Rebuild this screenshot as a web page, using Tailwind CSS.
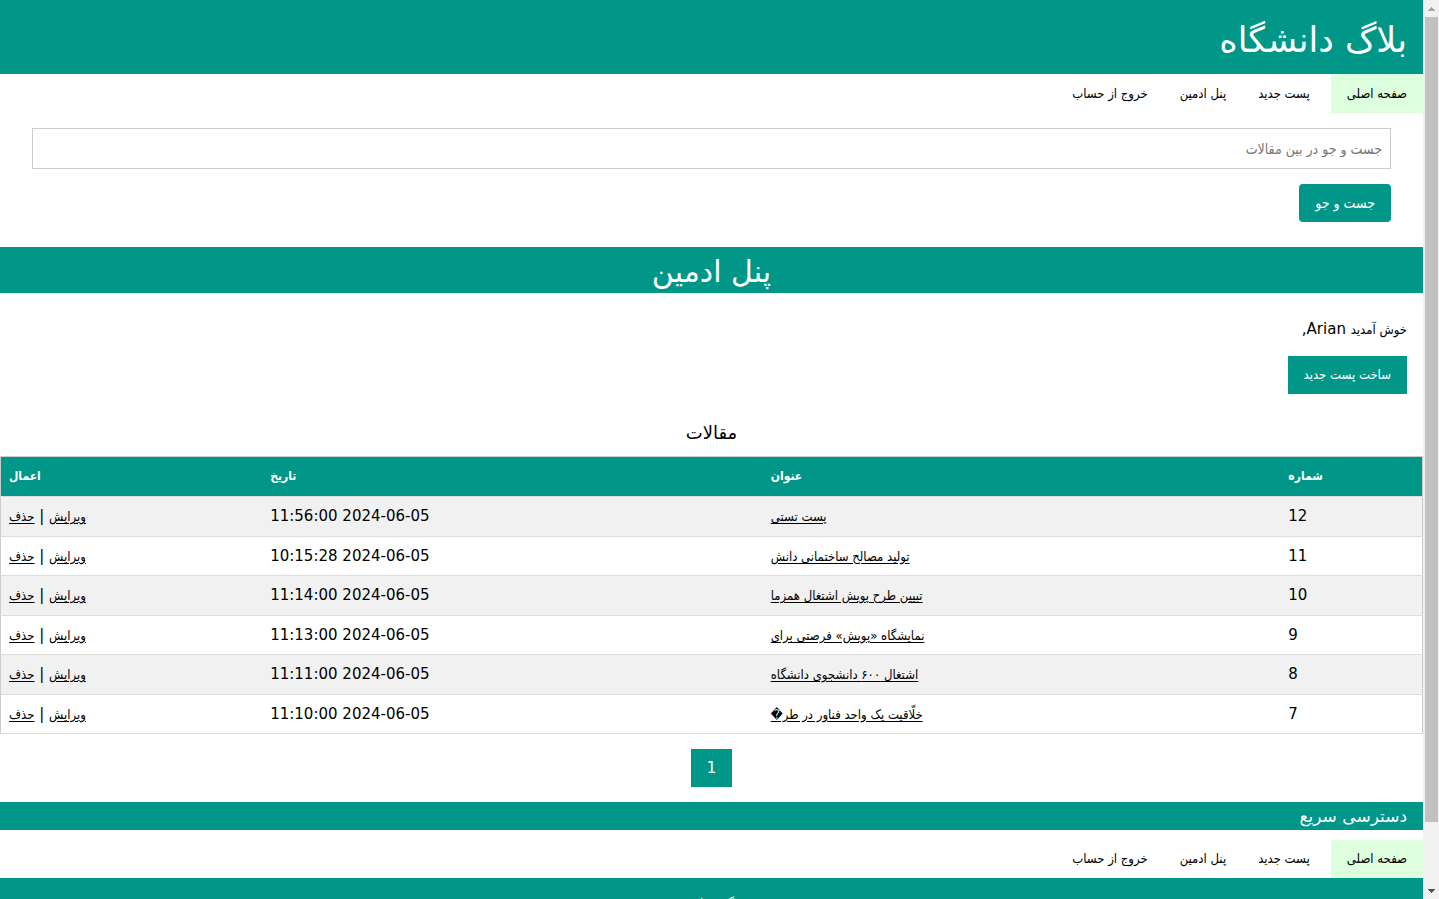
<!DOCTYPE html>
<html lang="fa">
<head>
<meta charset="utf-8">
<title>پنل ادمین</title>
<script src="https://cdn.jsdelivr.net/npm/@tailwindcss/browser@4"></script>
</head>
<body class="bg-white font-['DejaVu_Sans',sans-serif] text-[15px] leading-normal text-black">
<div class="flex h-screen overflow-hidden">
  <div dir="rtl" class="min-w-0 flex-1 overflow-y-hidden">
    <header class="bg-[#009688] px-4 pt-[13px] pb-[7px] text-white">
      <h1 class="text-[35px] leading-[54px]">بلاگ دانشگاه</h1>
    </header>
    <nav class="flex font-['DejaVu_Sans_Condensed','DejaVu_Sans',sans-serif] text-[13px] leading-[23px]">
      <a href="#" class="ml-[5px] bg-[#ddffdd] px-4 py-2">صفحه اصلی</a>
      <a href="#" class="px-4 py-2">پست جدید</a>
      <a href="#" class="px-4 py-2">پنل ادمین</a>
      <a href="#" class="px-4 py-2">خروج از حساب</a>
    </nav>
    <form class="px-8 pt-[15px] pb-[25px] font-['DejaVu_Sans_Condensed','DejaVu_Sans',sans-serif] text-[14px]">
      <input type="text" aria-label="جست و جو در بین مقالات" placeholder="جست و جو در بین مقالات" class="block h-[41px] w-full border border-[#ccc] p-2 placeholder:text-[#757575]">
      <button type="button" class="mt-[15px] block h-[38px] rounded-sm bg-[#009688] px-4 text-white">جست و جو</button>
    </form>
    <h2 class="bg-[#009688] pt-1 text-center text-[30px] leading-[42px] text-white">پنل ادمین</h2>
    <section class="px-4 pt-[25px]">
      <p class="leading-[23px]"><span class="font-['DejaVu_Sans_Condensed','DejaVu_Sans',sans-serif] text-[13px]">خوش آمدید</span> Arian,</p>
      <a href="#" class="mt-[15px] inline-block bg-[#009688] px-4 py-2 font-['DejaVu_Sans_Condensed','DejaVu_Sans',sans-serif] text-[13px] leading-[22px] text-white">ساخت پست جدید</a>
    </section>
    <h3 class="mt-[25px] mb-[9px] text-center text-[18px] leading-7">مقالات</h3>
    <table class="w-full table-fixed border-collapse border border-[#ccc] text-left">
      <thead class="font-['DejaVu_Sans_Condensed','DejaVu_Sans',sans-serif] text-[12px] leading-[23px]">
        <tr class="border-b border-[#ddd] bg-[#009688] text-white">
          <th class="w-[10%] p-2">شماره</th>
          <th class="w-[36.4%] p-2">عنوان</th>
          <th class="w-[35.2%] p-2">تاریخ</th>
          <th class="p-2">اعمال</th>
        </tr>
      </thead>
      <tbody id="posts"></tbody>
    </table>
    <div class="flex justify-center py-[15px]">
      <a href="#" class="bg-[#009688] px-4 py-2 leading-[22px] text-white">1</a>
    </div>
    <footer>
      <h4 class="mb-[10px] bg-[#009688] px-4 text-[17px] leading-7 text-white">دسترسی سریع</h4>
      <nav class="flex font-['DejaVu_Sans_Condensed','DejaVu_Sans',sans-serif] text-[13px] leading-[22px]">
        <a href="#" class="ml-[5px] bg-[#ddffdd] px-4 py-2">صفحه اصلی</a>
        <a href="#" class="px-4 py-2">پست جدید</a>
        <a href="#" class="px-4 py-2">پنل ادمین</a>
        <a href="#" class="px-4 py-2">خروج از حساب</a>
      </nav>
      <div class="bg-[#009688] py-4 text-center font-['DejaVu_Sans_Condensed','DejaVu_Sans',sans-serif] text-[13px] text-white">
        <a href="#">گیت هاب</a>
      </div>
    </footer>
  </div>
  <!-- page scrollbar -->
  <div aria-hidden="true" class="flex w-4 flex-col items-center bg-[#f1f1f1]">
    <svg class="h-[17px] w-4 shrink-0" viewBox="0 0 16 17" shape-rendering="crispEdges"><path fill="#a3a3a3" d="M8 7h1v1h1v1h1v1h1v1H5v-1h1V9h1V8h1z"/></svg>
    <div class="ml-px h-[805px] w-[13px] bg-[#c1c1c1]"></div>
    <svg class="mt-auto h-[17px] w-4 shrink-0" viewBox="0 0 16 17" shape-rendering="crispEdges"><path fill="#505050" d="M5 7h7v1h-1v1h-1v1H9v1H8v-1H7V9H6V8H5z"/></svg>
  </div>
</div>
<script>
const posts = [
  [12, 'پست تستی', '2024-06-05 11:56:00'],
  [11, 'تولید مصالح ساختمانی دانش', '2024-06-05 10:15:28'],
  [10, 'تبیین طرح پویش اشتغال همزما', '2024-06-05 11:14:00'],
  [9, 'نمایشگاه «پویش» فرصتی برای', '2024-06-05 11:13:00'],
  [8, 'اشتغال ۶۰۰ دانشجوی دانشگاه', '2024-06-05 11:11:00'],
  [7, 'خلّاقیت یک واحد فناور در طر\uFFFD', '2024-06-05 11:10:00'],
];
document.getElementById('posts').innerHTML = posts.map(([id, title, date]) => `
  <tr class="border-b border-[#ddd] odd:bg-[#f1f1f1]">
    <td class="p-2">${id}</td>
    <td class="p-2"><a href="#" class="font-['DejaVu_Sans_Condensed','DejaVu_Sans',sans-serif] text-[13px] underline underline-offset-2">${title}</a></td>
    <td class="p-2">${date}</td>
    <td class="p-2"><a href="#" class="font-['DejaVu_Sans_Condensed','DejaVu_Sans',sans-serif] text-[13px] underline underline-offset-2">ویرایش</a> | <a href="#" class="font-['DejaVu_Sans_Condensed','DejaVu_Sans',sans-serif] text-[13px] underline underline-offset-2">حذف</a></td>
  </tr>`).join('');
</script>
</body>
</html>
